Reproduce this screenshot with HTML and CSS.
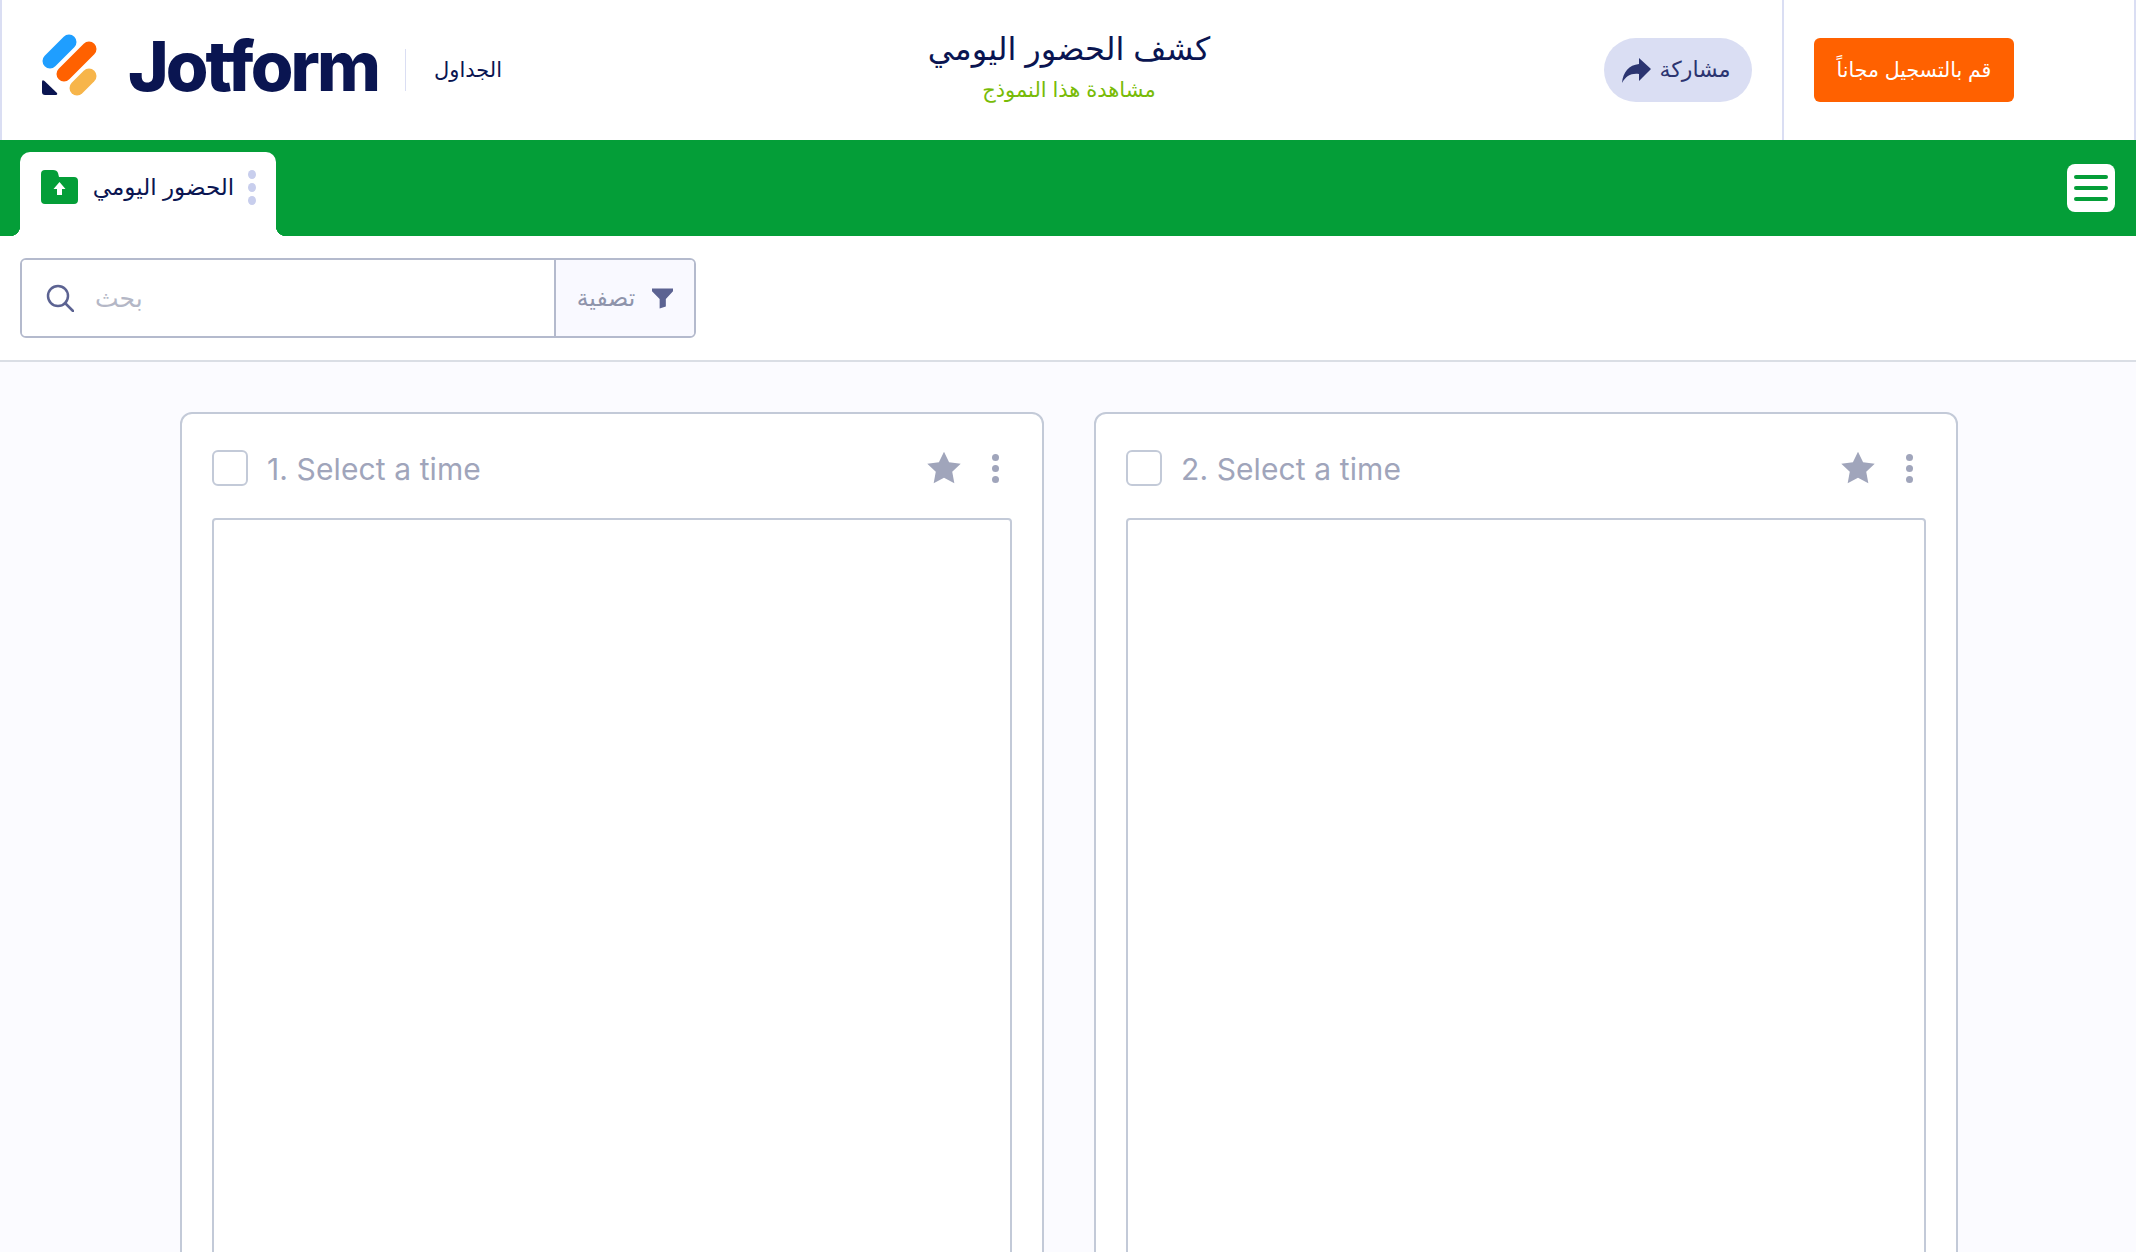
FILE: index.html
```html
<!DOCTYPE html>
<html lang="ar">
<head>
    <meta charset="UTF-8">
    <meta name="viewport" content="width=device-width, initial-scale=1.0">
    <title>كشف الحضور اليومي</title>
    <link rel="stylesheet" href="styles.css">
</head>
<body>
    <!-- Top header -->
    <header class="header">
        <div class="brand">
            <svg class="brand-mark" viewBox="0 0 56 62" aria-hidden="true">
                <path d="M9 27 L28 8" stroke="#1f9eff" stroke-width="15" stroke-linecap="round"/>
                <path d="M23 40 L48 15" stroke="#ff6100" stroke-width="15" stroke-linecap="round"/>
                <path d="M36 54 L48 42" stroke="#f7b54a" stroke-width="15" stroke-linecap="round"/>
                <path d="M1 48 Q1 45 3.500 47 L16 59 Q17 61 14 61 L4 61 Q1 61 1 58 Z" fill="#0a1551"/>
            </svg>
            <span class="brand-name">Jotform</span>
            <span class="brand-sep"></span>
            <span class="brand-sub" dir="rtl">الجداول</span>
        </div>
        <div class="title-block" dir="rtl">
            <div class="title">كشف الحضور اليومي</div>
            <div class="subtitle">مشاهدة هذا النموذج</div>
        </div>
        <div class="actions">
            <button class="share-btn">
                <svg class="share-icon" viewBox="0 0 30 26" aria-hidden="true">
                    <path d="M18 1 L30 12 L18 24 L18 17 C10 16 5 19 1 26 C2 15 8 8 18 7 Z" fill="#2b3470"/>
                </svg>
                <span dir="rtl">مشاركة</span>
            </button>
            <div class="signup-wrap">
                <button class="signup-btn" dir="rtl">قم بالتسجيل مجاناً</button>
            </div>
        </div>
    </header>

    <!-- Green tab bar -->
    <nav class="tabbar">
        <div class="tab">
            <svg class="tab-folder" viewBox="0 0 37 34" aria-hidden="true">
                <path d="M4 0 L12 0 Q16 0 17 3 L18 7 L33 7 Q37 7 37 11 L37 30 Q37 34 33 34 L4 34 Q0 34 0 30 L0 4 Q0 0 4 0 Z" fill="#049e38"/>
                <path d="M18.500 12 L24.500 19 L21 19 L21 25 L16 25 L16 19 L12.500 19 Z" fill="#fff"/>
            </svg>
            <span class="tab-label" dir="rtl">الحضور اليومي</span>
            <span class="tab-dots"><i></i><i></i><i></i></span>
        </div>
        <button class="menu-btn"><i></i><i></i><i></i></button>
    </nav>

    <!-- Search row -->
    <section class="toolbar">
        <div class="search">
            <div class="search-field">
                <svg class="search-icon" viewBox="0 0 28 28" aria-hidden="true">
                    <circle cx="12" cy="12" r="10" fill="none" stroke="#5c6392" stroke-width="2.500"/>
                    <path d="M19 19 L27 27" stroke="#5c6392" stroke-width="2.500" stroke-linecap="round"/>
                </svg>
                <span class="search-text" dir="rtl">بحث</span>
            </div>
            <div class="filter">
                <span class="filter-text" dir="rtl">تصفية</span>
                <svg class="filter-icon" viewBox="0 0 22 22" aria-hidden="true">
                    <path d="M0 1 L22 1 L22 4 L14.500 12 L14.500 20 L8 22 L8 12 L0 4 Z" fill="#5c6392"/>
                </svg>
            </div>
        </div>
    </section>

    <!-- Question cards -->
    <main class="cards">
        <div class="card">
            <div class="card-head">
                <span class="check"></span>
                <span class="card-title">1. Select a time</span>
                <svg class="star" viewBox="0 0 24 24" aria-hidden="true">
                    <path d="M12 0.500 L15.600 8 L23.800 9 L17.800 14.700 L19.300 22.800 L12 18.800 L4.700 22.800 L6.200 14.700 L0.200 9 L8.400 8 Z" fill="#a0a5bb"/>
                </svg>
                <span class="dots"><i></i><i></i><i></i></span>
            </div>
            <div class="card-body"></div>
        </div>
        <div class="card">
            <div class="card-head">
                <span class="check"></span>
                <span class="card-title">2. Select a time</span>
                <svg class="star" viewBox="0 0 24 24" aria-hidden="true">
                    <path d="M12 0.500 L15.600 8 L23.800 9 L17.800 14.700 L19.300 22.800 L12 18.800 L4.700 22.800 L6.200 14.700 L0.200 9 L8.400 8 Z" fill="#a0a5bb"/>
                </svg>
                <span class="dots"><i></i><i></i><i></i></span>
            </div>
            <div class="card-body"></div>
        </div>
    </main>
</body>
</html>
```

FILE: styles.css
```css
/* Global */
* {
    box-sizing: border-box;
}

html, body {
    height: 100%;
}

body {
    margin: 0;
    overflow: hidden;
    background-color: #fbfbff;
    color: #0a1551;
    font-family: "Liberation Sans", "DejaVu Sans", sans-serif;
}

button {
    font-family: inherit;
    border: none;
    padding: 0;
}

/* Header */
.header {
    display: grid;
    grid-template-columns: 1fr auto 1fr;
    height: 140px;
    background: #fff;
    border-left: 2px solid #dadef3;
    border-right: 2px solid #dadef3;
}

.brand {
    display: flex;
    align-items: center;
    padding-left: 39px;
}

.brand-mark {
    width: 56px;
    height: 62px;
    margin-top: -11px;
}

.brand-name {
    margin-left: 31px;
    font-family: Inter, sans-serif;
    font-size: 69px;
    font-weight: 800;
    letter-spacing: -2.900px;
    color: #0a1551;
    line-height: 1;
    margin-top: -8px;
}

.brand-sep {
    width: 1px;
    height: 42px;
    margin-left: 27px;
    background: #dadef3;
}

.brand-sub {
    margin-left: 28px;
    font-size: 21px;
}

.title-block {
    text-align: center;
    padding: 29px 0 0 2px;
}

.title {
    font-size: 32px;
    line-height: 40px;
    color: #0a1551;
}

.subtitle {
    margin-top: 9px;
    font-size: 21px;
    line-height: 24px;
    color: #78bb07;
}

.actions {
    display: flex;
    align-items: center;
    justify-content: flex-end;
}

.share-btn {
    display: flex;
    align-items: center;
    justify-content: center;
    gap: 8px;
    width: 148px;
    height: 64px;
    margin-right: 30px;
    padding-right: 4px;
    border-radius: 32px;
    background: #dadef3;
    color: #2b3470;
    font-size: 22px;
}

.share-icon {
    width: 30px;
    height: 26px;
}

.signup-wrap {
    display: flex;
    align-items: center;
    height: 100%;
    padding: 0 120px 0 30px;
    border-left: 2px solid #dadef3;
}

.signup-btn {
    width: 200px;
    height: 64px;
    border-radius: 6px;
    background: #ff6100;
    color: #fff;
    font-size: 20.500px;
}

/* Tab bar */
.tabbar {
    display: flex;
    align-items: flex-end;
    justify-content: space-between;
    height: 96px;
    padding: 0 21px 0 20px;
    background: #049e38;
}

.tab {
    position: relative;
    display: flex;
    align-items: center;
    width: 256px;
    height: 84px;
    padding: 0 20px 14px 21px;
    background: #fff;
    border-radius: 10px 10px 0 0;
}

.tab::before,
.tab::after {
    content: "";
    position: absolute;
    bottom: 0;
    width: 10px;
    height: 10px;
}

.tab::before {
    left: -10px;
    background: radial-gradient(circle at 0 0, #049e38 10px, #fff 10.500px);
}

.tab::after {
    right: -10px;
    background: radial-gradient(circle at 100% 0, #049e38 10px, #fff 10.500px);
}

.tab-folder {
    width: 37px;
    height: 34px;
    flex-shrink: 0;
}

.tab-label {
    flex: 1;
    margin-left: 13px;
    font-size: 23px;
    text-align: center;
    white-space: nowrap;
}

.tab-dots {
    display: flex;
    flex-direction: column;
    gap: 4px;
    margin-left: 12px;
}

.tab-dots i {
    width: 8px;
    height: 9px;
    border-radius: 50%;
    background: #c8ceed;
}

.menu-btn {
    display: flex;
    flex-direction: column;
    justify-content: center;
    gap: 7px;
    align-self: center;
    width: 48px;
    height: 48px;
    padding: 0 7px;
    border-radius: 8px;
    background: #fff;
}

.menu-btn i {
    display: block;
    height: 4px;
    border-radius: 2px;
    background: #049e38;
}

/* Search */
.toolbar {
    height: 126px;
    padding: 22px 20px 0;
    background: #fff;
    border-bottom: 2px solid #dadee5;
}

.search {
    display: flex;
    width: 676px;
    height: 80px;
    border: 2px solid #b4bacd;
    border-radius: 6px;
    overflow: hidden;
}

.search-field {
    display: flex;
    align-items: center;
    flex: 1;
    padding-left: 24px;
    background: #fff;
}

.search-icon {
    width: 28px;
    height: 28px;
}

.search-text {
    margin-left: 21px;
    font-size: 25px;
    color: #b4b7c6;
}

.filter {
    display: flex;
    align-items: center;
    justify-content: center;
    gap: 17px;
    width: 140px;
    border-left: 2px solid #b4bacd;
    background: #f9f9ff;
}

.filter-text {
    font-size: 23.500px;
    color: #8f94ab;
}

.filter-icon {
    width: 21px;
    height: 22px;
}

/* Cards */
.cards {
    display: grid;
    grid-template-columns: 864px 864px;
    gap: 50px;
    padding: 50px 0 0 180px;
}

.card {
    height: 1000px;
    padding: 36px 30px 0;
    background: #fff;
    border: 2px solid #c3cad8;
    border-radius: 12px;
}

.card-head {
    display: flex;
    align-items: center;
    height: 36px;
    margin-bottom: 32px;
}

.check {
    width: 36px;
    height: 36px;
    flex-shrink: 0;
    border: 2px solid #c3cad8;
    border-radius: 6px;
}

.card-title {
    flex: 1;
    margin: 2px 0 0 19px;
    font-family: Inter, sans-serif;
    font-size: 30px;
    letter-spacing: 0.100px;
    color: #a0a5bb;
}

.star {
    width: 34px;
    height: 34px;
}

.dots {
    display: flex;
    flex-direction: column;
    gap: 4px;
    margin: 0 13px 0 31px;
}

.dots i {
    width: 7px;
    height: 7px;
    border-radius: 50%;
    background: #a0a5bb;
}

.card-body {
    height: 900px;
    background: #fff;
    border: 2px solid #c3cad8;
    border-radius: 4px 4px 0 0;
}
```
